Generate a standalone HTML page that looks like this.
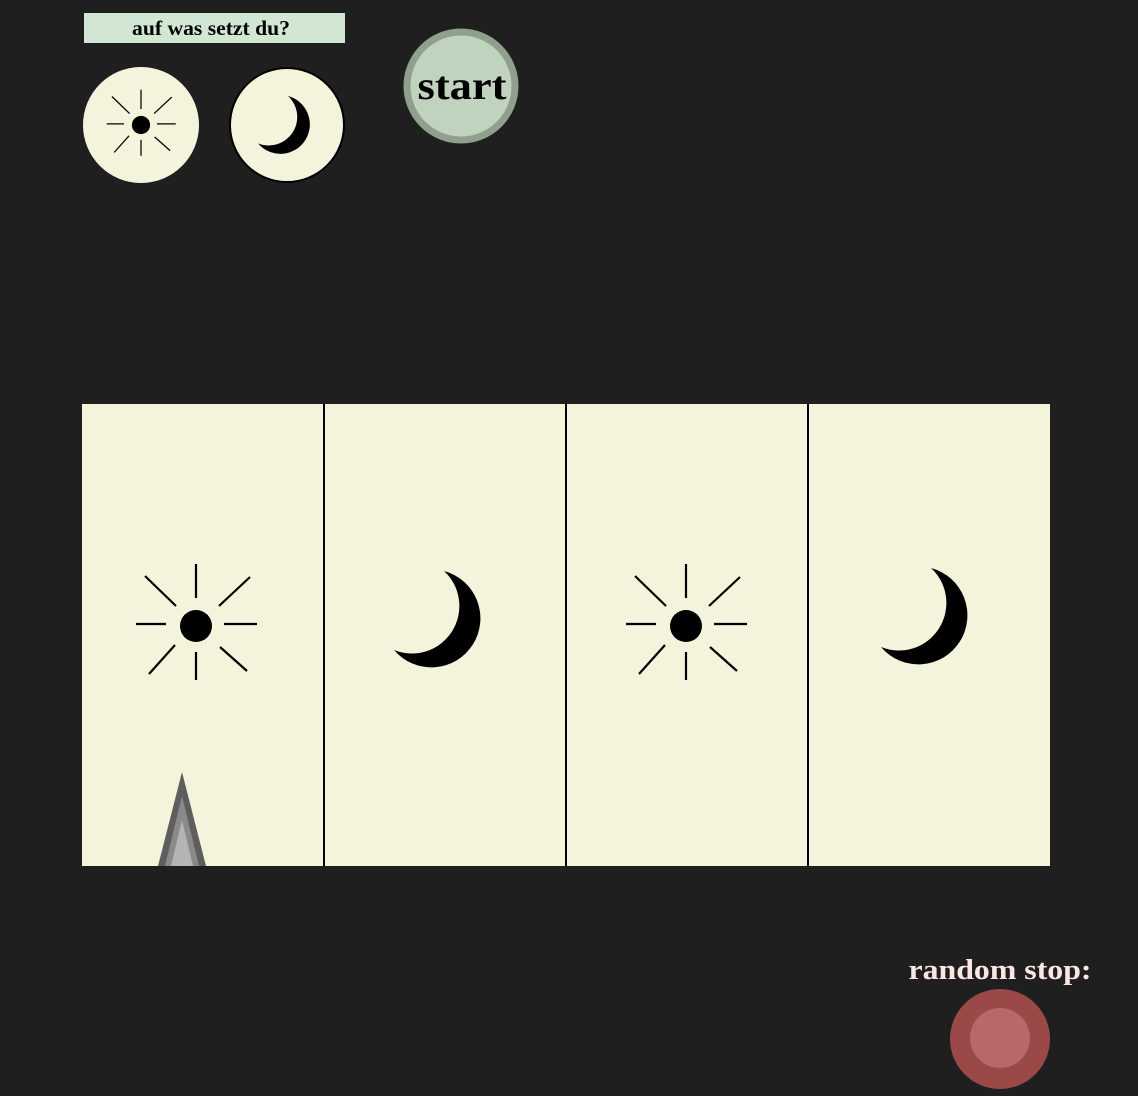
<!DOCTYPE html>
<html><head><meta charset="utf-8"><style>
html,body{margin:0;padding:0;background:#1f1f1f;width:1138px;height:1096px;overflow:hidden}
svg{position:absolute;left:0;top:0}
</style></head><body>
<svg width="1138" height="1096" viewBox="0 0 1138 1096">
<defs>
<g id="sun">
<circle cx="0" cy="0" r="16" fill="#000"/>
<g stroke="#000" stroke-width="2.2">
<line x1="0" y1="-62" x2="0" y2="-28"/>
<line x1="0" y1="26" x2="0" y2="54"/>
<line x1="-60" y1="-2" x2="-30" y2="-2"/>
<line x1="28" y1="-2" x2="61" y2="-2"/>
<line x1="-51" y1="-50" x2="-20" y2="-20"/>
<line x1="23" y1="-20" x2="54" y2="-49"/>
<line x1="-21" y1="19" x2="-47" y2="48"/>
<line x1="24" y1="21" x2="51" y2="45"/>
</g>
</g>
<path id="moon" d="M0,0 A49,49 0 1 1 -50,79 A47.5,47.5 0 0 0 0,0 Z" fill="#000"/>
</defs>
<rect x="84" y="13" width="261" height="30" fill="#d2e6d4"/>
<text x="211" y="35" text-anchor="middle" font-family="Liberation Serif, serif" font-weight="bold" font-size="21" fill="#000" textLength="158" lengthAdjust="spacingAndGlyphs">auf was setzt du?</text>
<circle cx="141" cy="125" r="58" fill="#f4f4dc"/>
<g transform="translate(141,125) scale(0.57)"><use href="#sun"/></g>
<circle cx="287" cy="125" r="57" fill="#f4f4dc" stroke="#000" stroke-width="2"/>
<g transform="translate(288,96) scale(0.6)"><use href="#moon"/></g>
<circle cx="461" cy="86" r="54" fill="#bfd3bf" stroke="#8fa08c" stroke-width="7"/>
<text x="462" y="99" text-anchor="middle" font-family="Liberation Serif, serif" font-weight="bold" font-size="40" fill="#000" textLength="89" lengthAdjust="spacingAndGlyphs">start</text>
<rect x="82" y="404" width="968" height="462" fill="#f4f4dc"/>
<g stroke="#000" stroke-width="2">
<line x1="324" y1="404" x2="324" y2="866"/>
<line x1="566" y1="404" x2="566" y2="866"/>
<line x1="808" y1="404" x2="808" y2="866"/>
</g>
<g transform="translate(196,626)"><use href="#sun"/></g>
<g transform="translate(686,626)"><use href="#sun"/></g>
<g transform="translate(444,571)"><use href="#moon"/></g>
<g transform="translate(931,568)"><use href="#moon"/></g>
<polygon points="182,772 206,866 158,866" fill="#5e5e5e"/>
<polygon points="182,796 199,866 165,866" fill="#8a8a8a"/>
<polygon points="182,820 193,866 171,866" fill="#b4b4b4"/>
<text x="1000" y="979" text-anchor="middle" font-family="Liberation Serif, serif" font-weight="bold" font-size="29" fill="#fbe6e4" textLength="183" lengthAdjust="spacingAndGlyphs">random stop:</text>
<circle cx="1000" cy="1039" r="50" fill="#9a4848"/>
<circle cx="1000" cy="1038" r="30" fill="#b86868"/>
</svg>
</body></html>
